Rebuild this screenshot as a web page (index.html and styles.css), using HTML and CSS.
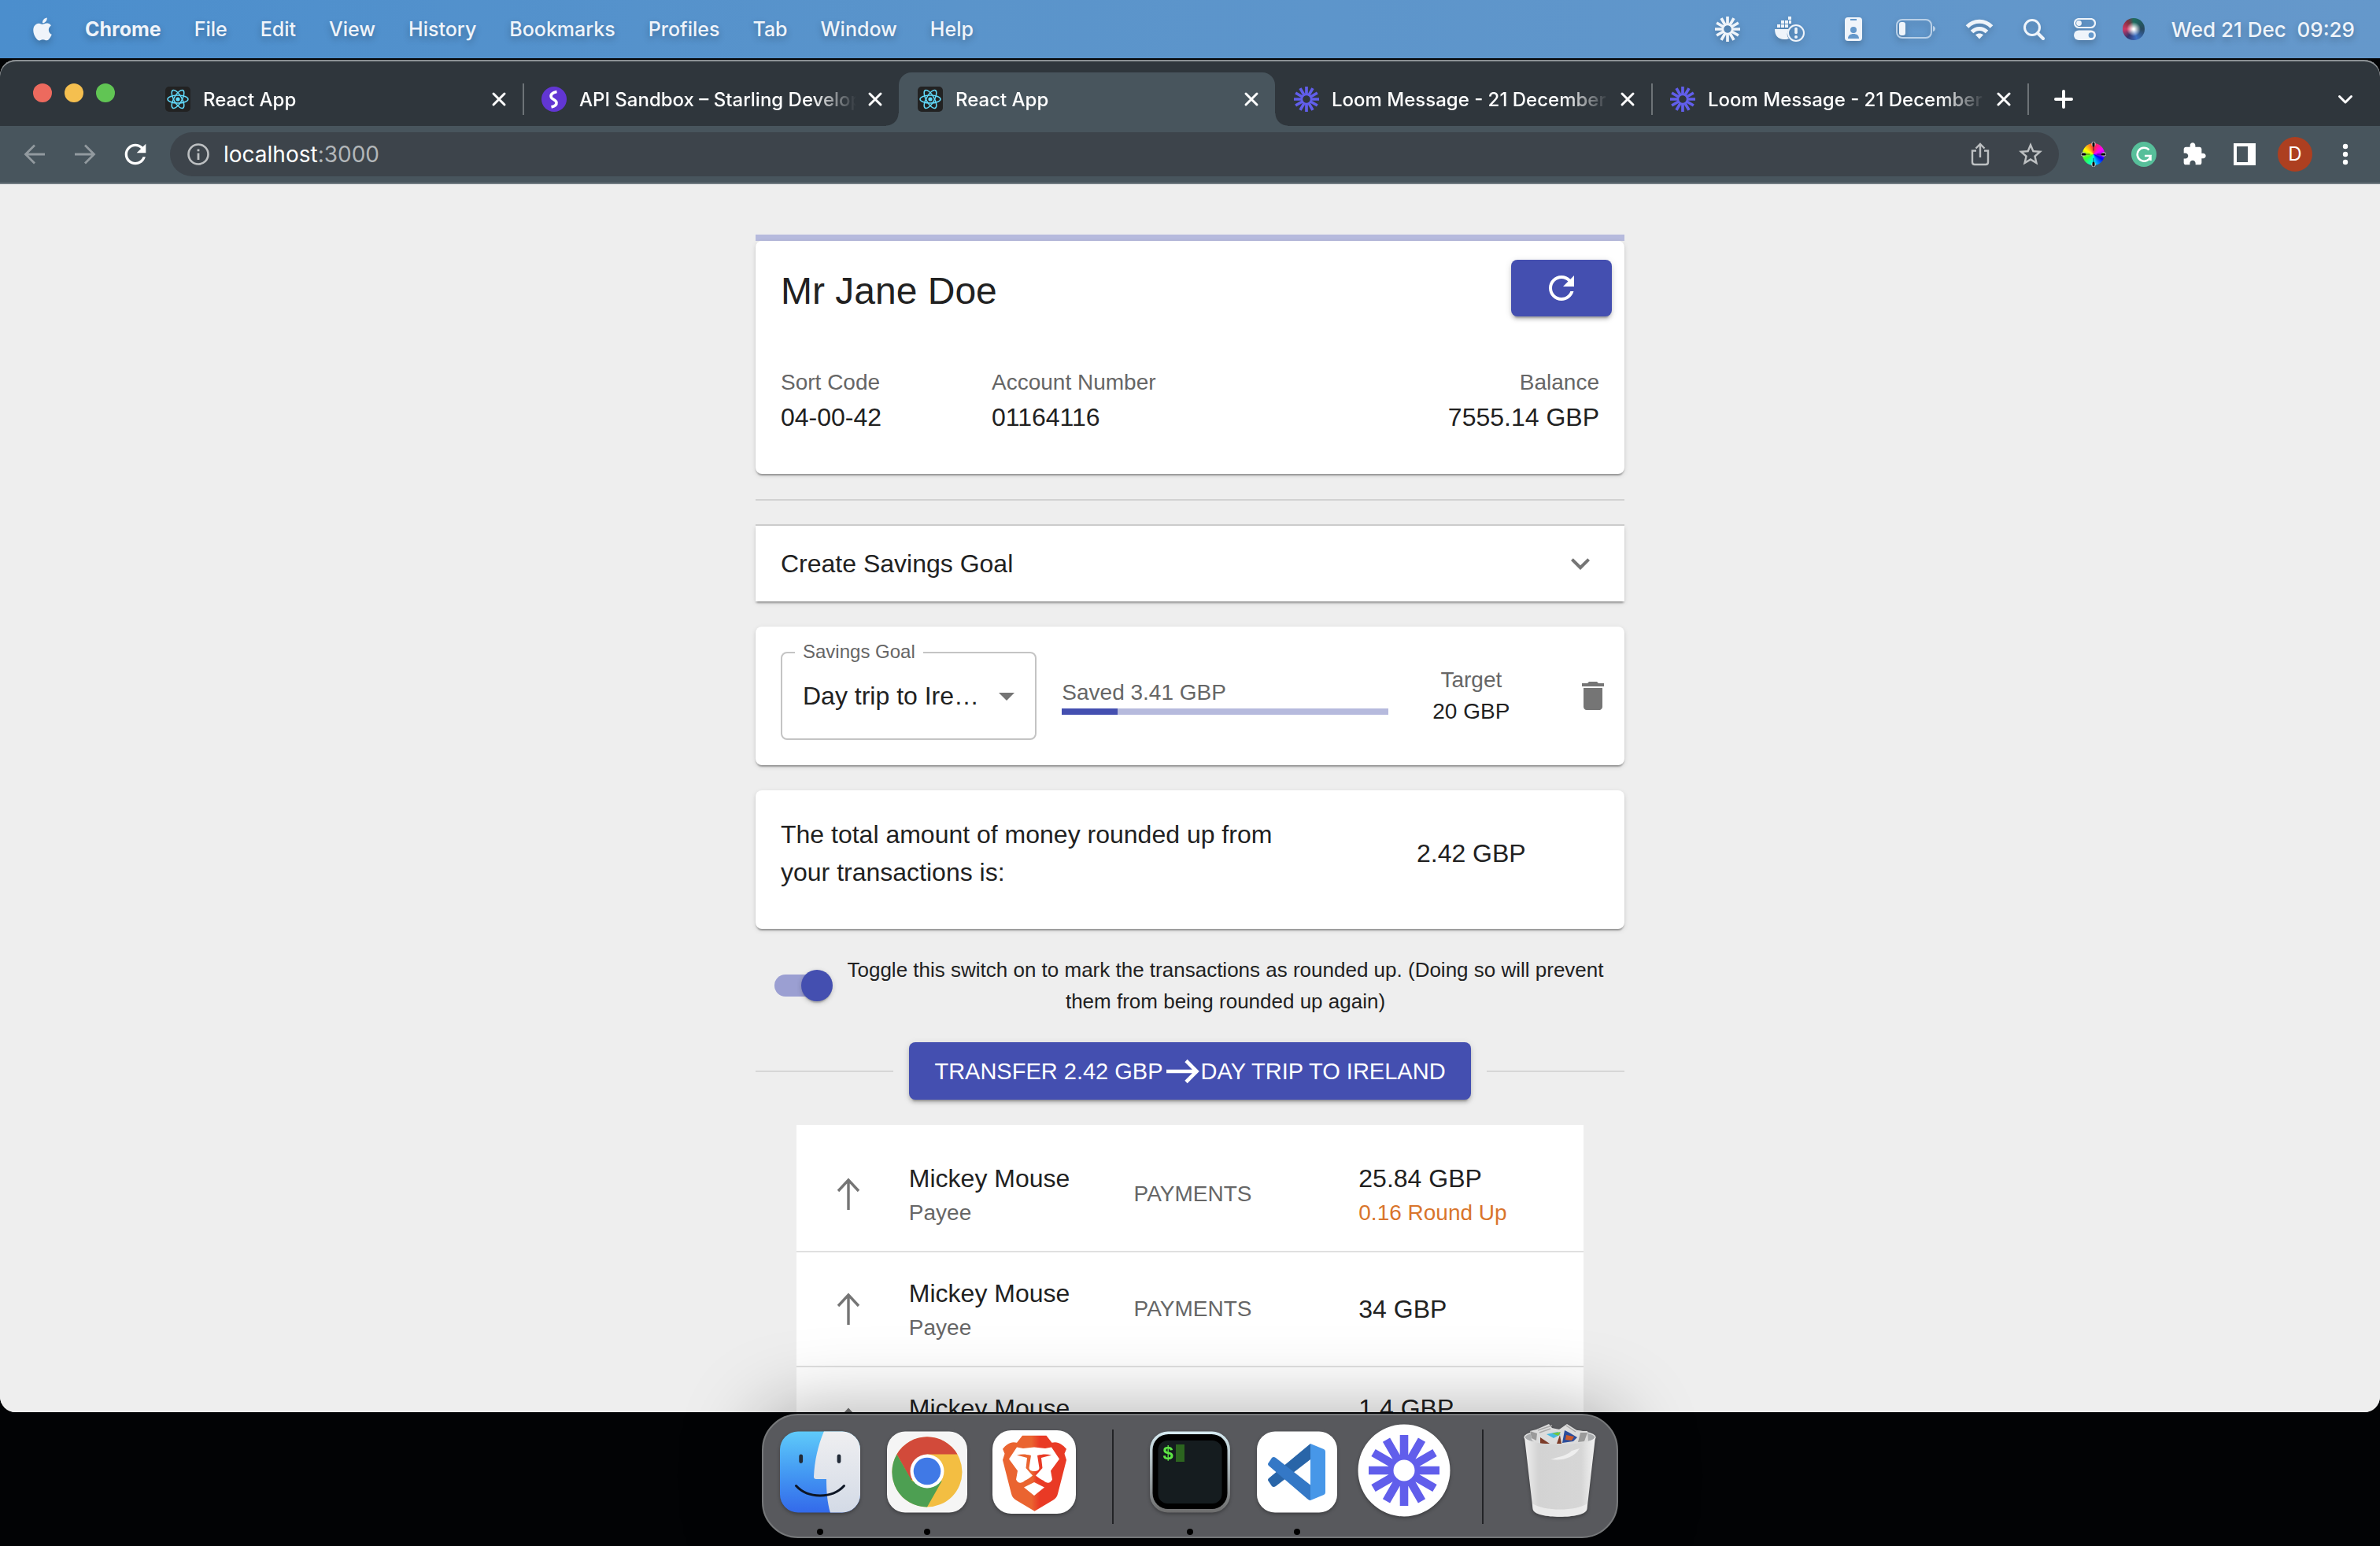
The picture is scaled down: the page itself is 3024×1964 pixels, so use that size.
FILE: index.html
```
<!DOCTYPE html>
<html lang="en">
<head>
    <meta charset="utf-8">
    <title>React App</title>
    <link rel="stylesheet" href="styles.css">
</head>
<body>

<!-- shared icons -->
<svg class="sprite" aria-hidden="true">
    <symbol id="react" viewBox="0 0 32 32">
        <rect width="32" height="32" rx="5" fill="#222"/>
        <g fill="none" stroke="#61dafb" stroke-width="1.5">
            <ellipse cx="16" cy="16" rx="13" ry="5"/>
            <ellipse cx="16" cy="16" rx="13" ry="5" transform="rotate(60 16 16)"/>
            <ellipse cx="16" cy="16" rx="13" ry="5" transform="rotate(120 16 16)"/>
        </g>
        <circle cx="16" cy="16" r="2.6" fill="#61dafb"/>
    </symbol>
    <symbol id="burst" viewBox="-16 -16 32 32">
        <g stroke="currentColor" stroke-width="3.7">
            <path d="M0-16V-5M0 16V5M-16 0H-5M16 0H5"/>
            <path d="M0-16V-5M0 16V5M-16 0H-5M16 0H5" transform="rotate(30)"/>
            <path d="M0-16V-5M0 16V5M-16 0H-5M16 0H5" transform="rotate(60)"/>
        </g>
        <circle r="6" fill="none" stroke="currentColor" stroke-width="2.4"/>
    </symbol>
    <symbol id="close" viewBox="0 0 32 32">
        <path d="M9 9l14 14M23 9L9 23" stroke="currentColor" stroke-width="3" stroke-linecap="round"/>
    </symbol>
    <symbol id="refresh" viewBox="0 0 24 24">
        <path fill="currentColor" d="M17.65 6.35C16.2 4.9 14.21 4 12 4c-4.42 0-7.99 3.58-7.99 8s3.57 8 7.99 8c3.73 0 6.84-2.55 7.73-6h-2.08c-.82 2.33-3.04 4-5.65 4-3.31 0-6-2.69-6-6s2.69-6 6-6c1.66 0 3.14.69 4.22 1.78L13 11h7V4l-2.35 2.35z"/>
    </symbol>
    <symbol id="up" viewBox="0 0 48 48">
        <path d="M24 44V6M11 20L24 6l13 14" fill="none" stroke="currentColor" stroke-width="3.4"/>
    </symbol>
</svg>

<div class="desktop">
    <header class="menubar">
        <nav class="menus">
            <svg class="apple" viewBox="2 0 20 24"><path fill="currentColor" d="M12.152 6.896c-.948 0-2.415-1.078-3.96-1.04-2.04.027-3.91 1.183-4.961 3.014-2.117 3.675-.546 9.103 1.519 12.09 1.013 1.454 2.208 3.09 3.792 3.039 1.52-.065 2.09-.987 3.935-.987 1.831 0 2.35.987 3.96.948 1.637-.026 2.676-1.48 3.676-2.948 1.156-1.688 1.636-3.325 1.662-3.415-.039-.013-3.182-1.221-3.22-4.857-.026-3.04 2.48-4.494 2.597-4.559-1.429-2.09-3.623-2.324-4.39-2.376-2-.156-3.675 1.09-4.61 1.09zM15.53 3.83c.843-1.012 1.4-2.427 1.245-3.83-1.207.052-2.662.805-3.532 1.818-.78.896-1.454 2.338-1.273 3.714 1.338.104 2.715-.688 3.559-1.701"/></svg>
            <button class="app-name">Chrome</button>
            <button>File</button>
            <button>Edit</button>
            <button>View</button>
            <button>History</button>
            <button>Bookmarks</button>
            <button>Profiles</button>
            <button>Tab</button>
            <button>Window</button>
            <button>Help</button>
        </nav>
        <div class="status">
            <svg width="32" height="32"><use href="#burst"/></svg>
            <!-- docker -->
            <svg width="56" height="36" viewBox="0 0 56 36">
                <g fill="currentColor">
                    <path d="M10 18h18c-3 4-3 9 0 12-2 1-4 1-6 1-8 0-12-5-12-13z"/>
                    <path d="M13 12h4v4h-4zM18 12h4v4h-4zM23 12h4v4h-4zM18 7h4v4h-4zM23 7h4v4h-4zM27 2h4v4h-4zM28 7h3v4h-3z"/>
                </g>
                <circle cx="37" cy="23" r="10" fill="none" stroke="currentColor" stroke-width="2"/>
                <path d="M37 17.500v5" stroke="currentColor" stroke-width="3.600" stroke-linecap="round"/>
                <circle cx="37" cy="28" r="2" fill="currentColor"/>
            </svg>
            <svg width="40" height="32" viewBox="0 0 40 32">
                <rect x="9" y="1" width="22" height="30" rx="4" fill="currentColor"/>
                <g fill="#6498cb"><rect x="16" y="3" width="8" height="2"/><circle cx="20" cy="17" r="4"/><path d="M13 28c0-4 3-6 7-6s7 2 7 6z"/></g>
            </svg>
            <!-- battery -->
            <svg width="52" height="26" viewBox="0 0 52 26">
                <rect x="1" y="1" width="44" height="23" rx="7" fill="none" stroke="#b9d0e8" stroke-width="2"/>
                <rect x="4" y="4" width="8" height="17" rx="3" fill="currentColor"/>
                <path d="M47 9c4 1 4 6 0 7z" fill="#b9d0e8"/>
            </svg>
            <svg width="40" height="32" viewBox="0 0 40 32">
                <g fill="none" stroke="currentColor" stroke-width="5"><path d="M4.500 13c8.500-9 22.500-9 31 0"/><path d="M10.500 19.500c5.500-5.500 13.500-5.500 19 0"/></g>
                <path d="M20 28.500l-5-5.200c3-2.500 7-2.500 10 0z" fill="currentColor"/>
            </svg>
            <svg width="32" height="32" viewBox="0 0 32 32"><g fill="none" stroke="currentColor"><circle cx="13" cy="14" r="9.500" stroke-width="3"/><path d="M20 21l7 7" stroke-width="4" stroke-linecap="round"/></g></svg>
            <svg width="28" height="28" viewBox="0 0 28 28">
                <rect x="1" y="1" width="26" height="11" rx="5.500" fill="none" stroke="currentColor" stroke-width="2.200"/><circle cx="6.500" cy="6.500" r="3.400" fill="currentColor"/>
                <rect y="15.500" width="28" height="12.500" rx="6.200" fill="currentColor"/><circle cx="22" cy="21.700" r="3.400" fill="#6498cb"/>
            </svg>
            <span class="siri"></span>
            <time>Wed 21 Dec &nbsp;09:29</time>
        </div>
    </header>

    <section class="window">
        <div class="tabstrip">
            <div class="lights"><i class="red"></i><i class="yellow"></i><i class="green"></i></div>
            <div class="tab divided">
                <svg class="favicon"><use href="#react"/></svg>
                <span class="tab-title">React App</span>
                <button class="tab-close" aria-label="Close tab"><svg><use href="#close"/></svg></button>
            </div>
            <div class="tab">
                <svg class="favicon" viewBox="0 0 32 32"><circle cx="16" cy="16" r="16" fill="#6236d3"/><path d="M19.500 6.500c-6 1-8.500 4-7 7.500 1 2 6 3 6.500 6 .4 3-2 5-6.500 6" fill="none" stroke="#fff" stroke-width="3.600"/></svg>
                <span class="tab-title">API Sandbox – Starling Develop</span>
                <button class="tab-close" aria-label="Close tab"><svg><use href="#close"/></svg></button>
            </div>
            <div class="tab active">
                <svg class="favicon"><use href="#react"/></svg>
                <span class="tab-title">React App</span>
                <button class="tab-close" aria-label="Close tab"><svg><use href="#close"/></svg></button>
            </div>
            <div class="tab divided">
                <svg class="favicon loom"><use href="#burst"/></svg>
                <span class="tab-title">Loom Message - 21 December</span>
                <button class="tab-close" aria-label="Close tab"><svg><use href="#close"/></svg></button>
            </div>
            <div class="tab divided">
                <svg class="favicon loom"><use href="#burst"/></svg>
                <span class="tab-title">Loom Message - 21 December</span>
                <button class="tab-close" aria-label="Close tab"><svg><use href="#close"/></svg></button>
            </div>
            <button class="strip-btn" aria-label="New tab"><svg width="32" height="32" viewBox="0 0 32 32"><path d="M16 6v20M6 16h20" stroke="currentColor" stroke-width="4" stroke-linecap="round"/></svg></button>
            <button class="strip-btn last" aria-label="Search tabs"><svg width="32" height="32" viewBox="0 0 32 32"><path d="M8.500 12.500L16 20l7.500-7.500" fill="none" stroke="currentColor" stroke-width="3" stroke-linecap="round" stroke-linejoin="round"/></svg></button>
        </div>

        <div class="toolbar">
            <button class="dim" aria-label="Back"><svg width="32" height="32" viewBox="0 0 32 32"><path d="M29 16H5M16 4.500L4.500 16 16 27.500" fill="none" stroke="currentColor" stroke-width="2.800"/></svg></button>
            <button class="dim" aria-label="Forward"><svg width="32" height="32" viewBox="0 0 32 32"><path d="M3 16h24M16 4.500L27.500 16 16 27.500" fill="none" stroke="currentColor" stroke-width="2.800"/></svg></button>
            <button aria-label="Reload"><svg width="40" height="40"><use href="#refresh"/></svg></button>
            <div class="omnibox">
                <svg width="28" height="28" viewBox="0 0 28 28"><circle cx="14" cy="14" r="12.500" fill="none" stroke="currentColor" stroke-width="2.600"/><path d="M14 12.500V21M14 7.500v2.800" stroke="currentColor" stroke-width="2.800"/></svg>
                <div class="url">localhost<span>:3000</span></div>
                <button aria-label="Share"><svg width="32" height="32" viewBox="0 0 32 32"><path d="M11 11.500H6V26q0 3 3 3h14q3 0 3-3V11.500h-5M16 20V4M10.500 8.500L16 3l5.500 5.500" fill="none" stroke="currentColor" stroke-width="2.400"/></svg></button>
                <button aria-label="Bookmark this tab"><svg width="36" height="36" viewBox="0 0 24 24"><path fill="currentColor" d="M22 9.240l-7.190-.62L12 2 9.190 8.630 2 9.240l5.460 4.730L5.820 21 12 17.270 18.180 21l-1.630-7.030L22 9.240zM12 15.400l-3.760 2.270 1-4.280-3.320-2.880 4.380-.38L12 6.100l1.710 4.040 4.380.38-3.320 2.880 1 4.280L12 15.400z"/></svg></button>
            </div>
            <button class="ext" aria-label="Color picker"><span class="wheel"></span><svg class="wheel-pins" width="32" height="32" viewBox="0 0 32 32"><g stroke-linecap="round"><path d="M16 2.500v1M16 28.500v1M2.500 16h1M28.500 16h1" stroke="#ddd" stroke-width="5"/><path d="M16 2v3M16 27v3M2 16h3M27 16h3" stroke="#000" stroke-width="3"/><path d="M16 5v6M16 21v6M5 16h6M21 16h6" stroke="#222" stroke-width="1.200" opacity=".7"/></g></svg></button>
            <button class="ext" aria-label="Grammarly"><svg width="32" height="32" viewBox="0 0 32 32"><circle cx="16" cy="16" r="16" fill="#57bf9a"/><path d="M22.500 10.500a8.500 8.500 0 1 0 2 7.500H17M24.500 18v6" fill="none" stroke="#fff" stroke-width="2.500"/></svg></button>
            <button class="ext" aria-label="Extensions"><svg width="32" height="32" viewBox="0 0 24 24"><path fill="currentColor" d="M20.500 11H19V7c0-1.100-.9-2-2-2h-4V3.500C13 2.120 11.880 1 10.500 1S8 2.120 8 3.500V5H4c-1.100 0-1.990.9-1.990 2v3.800H3.500c1.490 0 2.700 1.210 2.700 2.700s-1.210 2.700-2.700 2.700H2V20c0 1.100.9 2 2 2h3.800v-1.500c0-1.490 1.210-2.700 2.700-2.700s2.700 1.210 2.700 2.700V22H17c1.100 0 2-.9 2-2v-4h1.500c1.380 0 2.500-1.120 2.500-2.500S21.880 11 20.500 11z"/></svg></button>
            <button class="ext" aria-label="Side panel"><svg width="28" height="28" viewBox="0 0 28 28"><path fill="currentColor" fill-rule="evenodd" d="M0 0h28v28H0zM4 4v20h14V4z"/></svg></button>
            <button class="ext" aria-label="Profile"><span class="avatar">D</span></button>
            <button class="ext" aria-label="Menu"><svg width="8" height="28" viewBox="0 0 8 28"><g fill="currentColor"><circle cx="4" cy="4" r="3.200"/><circle cx="4" cy="14" r="3.200"/><circle cx="4" cy="24" r="3.200"/></g></svg></button>
        </div>

        <main class="page">
            <div class="app">
                <div class="account">
                    <div class="bar"></div>
                    <div class="card">
                        <div class="card-header">
                            <h1>Mr Jane Doe</h1>
                            <button class="btn" aria-label="Refresh"><svg width="48" height="48"><use href="#refresh"/></svg></button>
                        </div>
                        <div class="grid">
                            <div class="span3"><p class="small">Sort Code</p><p>04-00-42</p></div>
                            <div class="span3"><p class="small">Account Number</p><p>01164116</p></div>
                            <div class="span6 right"><p class="small">Balance</p><p>7555.14 GBP</p></div>
                        </div>
                    </div>
                </div>

                <hr>

                <button class="accordion">
                    <span>Create Savings Goal</span>
                    <svg width="48" height="48" viewBox="0 0 24 24"><path fill="#757575" d="M16.590 8.590 12 13.170 7.410 8.590 6 10l6 6 6-6z"/></svg>
                </button>

                <div class="card goal">
                    <div class="grid middle">
                        <div class="span4 select-box">
                            <label for="goal">Savings Goal</label>
                            <select id="goal">
                                <option>Day trip to Ireland</option>
                            </select>
                            <svg viewBox="0 0 24 24"><path fill="#757575" d="M7 10l5 5 5-5z"/></svg>
                        </div>
                        <div class="span5">
                            <p class="small">Saved 3.41 GBP</p>
                            <div class="bar"><div class="fill" style="width: 17.050%"></div></div>
                        </div>
                        <div class="span2 center">
                            <p class="small">Target</p>
                            <p class="small dark">20 GBP</p>
                        </div>
                        <button class="delete" aria-label="Delete goal"><svg width="48" height="48" viewBox="0 0 24 24"><path fill="currentColor" d="M6 19c0 1.100.9 2 2 2h8c1.100 0 2-.9 2-2V7H6v12zM19 4h-3.500l-1-1h-5l-1 1H5v2h14V4z"/></svg></button>
                    </div>
                </div>

                <div class="card total">
                    <div class="grid middle">
                        <p class="span8">The total amount of money rounded up from your transactions is:</p>
                        <p class="span4 center">2.42 GBP</p>
                    </div>
                </div>

                <div class="toggle">
                    <input type="checkbox" id="mark" checked>
                    <label for="mark">Toggle this switch on to mark the transactions as rounded up. (Doing so will prevent them from being rounded up again)</label>
                </div>

                <div class="transfer">
                    <button class="btn">
                        TRANSFER 2.42 GBP
                        <svg width="48" height="48" viewBox="0 0 48 48"><path d="M4 24h38M29 10.500L42.500 24 29 37.500" fill="none" stroke="currentColor" stroke-width="4.600"/></svg>
                        DAY TRIP TO IRELAND
                    </button>
                </div>

                <ul class="list">
                    <li>
                        <svg><use href="#up"/></svg>
                        <div><p>Mickey Mouse</p><p class="small">Payee</p></div>
                        <p class="small">PAYMENTS</p>
                        <div><p>25.84 GBP</p><p class="small orange">0.16 Round Up</p></div>
                    </li>
                    <li>
                        <svg><use href="#up"/></svg>
                        <div><p>Mickey Mouse</p><p class="small">Payee</p></div>
                        <p class="small">PAYMENTS</p>
                        <p>34 GBP</p>
                    </li>
                    <li>
                        <svg><use href="#up"/></svg>
                        <div><p>Mickey Mouse</p><p class="small">Payee</p></div>
                        <p class="small">PAYMENTS</p>
                        <div><p>1.4 GBP</p><p class="small orange">0.6 Round Up</p></div>
                    </li>
                </ul>
            </div>
        </main>
    </section>

    <footer class="dock">
        <!-- finder -->
        <div class="dock-item running">
            <svg viewBox="0 0 136 136">
                <defs>
                    <linearGradient id="fblue" x1="0" y1="0" x2="0" y2="1"><stop offset="0" stop-color="#5fcbfa"/><stop offset=".5" stop-color="#449af3"/><stop offset="1" stop-color="#3369ea"/></linearGradient>
                    <linearGradient id="fgrey" x1="0" y1="0" x2="0" y2="1"><stop offset="0" stop-color="#efeff1"/><stop offset="1" stop-color="#d3dae6"/></linearGradient>
                    <clipPath id="fclip"><rect x="17" y="16.500" width="102" height="103" rx="23"/></clipPath>
                </defs>
                <g clip-path="url(#fclip)">
                    <rect x="16" y="16" width="104" height="104" fill="url(#fblue)"/>
                    <path d="M73 16C65 35 61 54 60 74q0 3 3 3h13c0 15 1 29 5 43h40V16z" fill="url(#fgrey)"/>
                </g>
                <path d="M43.700 48v6.500M92 48v6.500" stroke="#222b38" stroke-width="4.800" stroke-linecap="round"/>
                <path d="M37.500 85.500c15 16.500 46 16.500 61 0" fill="none" stroke="#0d1524" stroke-width="3" stroke-linecap="round"/>
            </svg>
        </div>
        <!-- chrome -->
        <div class="dock-item running">
            <svg viewBox="0 0 136 136">
                <rect x="17" y="16.500" width="102" height="103" rx="23" fill="#f5f5f5"/>
                <circle cx="68" cy="68" r="44.500" fill="#f3be42"/>
                <path d="M68 45.500h38.500A44.500 44.500 0 0 0 29.500 45.500L48 79z" fill="#d24a3a"/>
                <path d="M29.500 45.500A44.500 44.500 0 0 0 68 112.500L87 79 68 88 48.500 79z" fill="#4d9f52"/>
                <circle cx="68" cy="67" r="21.500" fill="#fff"/>
                <circle cx="68" cy="67" r="17.300" fill="#4079e6"/>
            </svg>
        </div>
        <!-- brave -->
        <div class="dock-item">
            <svg viewBox="0 0 136 136">
                <defs><linearGradient id="brave"><stop offset=".45" stop-color="#ea6430"/><stop offset=".58" stop-color="#e93a25"/></linearGradient></defs>
                <rect x="15" y="15" width="106" height="106" rx="24" fill="#fff"/>
                <path d="M53 21.700h30.500l7 9c8-2 13 2 18.500 8l-2.500 6 2.500 8-11 43c-1 4-3 6-6 8l-23.500 14-23.500-14c-3-2-5-4-6-8l-11-43 2.500-8-2.500-6c5-6 10-10 18-8z" fill="url(#brave)"/>
                <path d="M68 36.500l14 1.500 8-1.500 10 15-11 15 2 11c-3 6-7 5-11 1.500l-12-6-12 6c-4 3.500-8 4.500-11-1.500l2-11-11-15 10-15 8 1.500z" fill="#fff"/>
                <path d="M46 46.500c6-1.500 11-1.500 18 .5l-2.500 16q.5 4 6.500 4t6.500-4L72 47c7-2 12-2 18-.5l-13 3.500 1.500 13-8.500 9.500 7 5.500-9 4-9-4 7-5.500-8.500-9.500L59 50z" fill="url(#brave)"/>
                <path d="M55 87.500l13-6.500 13 6.500L68 98z" fill="#fff"/>
            </svg>
        </div>
        <div class="dock-sep"></div>
        <!-- terminal -->
        <div class="dock-item running">
            <svg viewBox="0 0 136 136">
                <defs><linearGradient id="steel" x1="0" y1="0" x2="0" y2="1"><stop offset="0" stop-color="#d6ebf2"/><stop offset="1" stop-color="#6d6d6d"/></linearGradient></defs>
                <rect x="17" y="16.500" width="102" height="103" rx="23" fill="url(#steel)"/>
                <rect x="20.500" y="20" width="95" height="95" rx="20"/>
                <rect x="27.500" y="28" width="81" height="80" rx="12" fill="#151c1f"/>
                <text x="33" y="52" class="prompt">$</text>
                <rect x="50" y="33" width="11" height="22" fill="#2c651f"/>
            </svg>
        </div>
        <!-- vs code -->
        <div class="dock-item running">
            <svg viewBox="0 0 136 136">
                <rect x="17" y="16.500" width="102" height="103" rx="23" fill="#fff"/>
                <path d="M85 32L32 76q-2 2 0 4l4 6q2 2 5 0L85 52z" fill="#2965a8"/>
                <path d="M32 60q-2-2 0-4l4-6q2-2 5 0L85 84.500V104q-2 0-4-2z" fill="#3478c6"/>
                <path d="M85 32l17 7q2 1 2 3v52q0 2-2 3l-17 7z" fill="#4797e8"/>
            </svg>
        </div>
        <!-- loom -->
        <div class="dock-item">
            <svg viewBox="0 0 136 136">
                <circle cx="68" cy="66" r="58.500" fill="#fff"/>
                <g stroke="#615eeb" stroke-width="10.600">
                    <path d="M68 21v28M68 83v28M23 66h28M85 66h28"/>
                    <path d="M68 21v28M68 83v28M23 66h28M85 66h28" transform="rotate(30 68 66)"/>
                    <path d="M68 21v28M68 83v28M23 66h28M85 66h28" transform="rotate(60 68 66)"/>
                </g>
                <circle cx="68" cy="66" r="17" fill="none" stroke="#615eeb" stroke-width="7"/>
            </svg>
        </div>
        <div class="dock-sep"></div>
        <!-- trash -->
        <div class="dock-item">
            <svg viewBox="0 0 136 136">
                <defs><linearGradient id="bin"><stop offset="0" stop-color="#eee"/><stop offset=".2" stop-color="#d3d3d3"/><stop offset=".8" stop-color="#d6d6d6"/><stop offset="1" stop-color="#f2f2f2"/></linearGradient></defs>
                <ellipse cx="68" cy="24" rx="45" ry="9.500" fill="#a9abad" stroke="#e4e4e4" stroke-width="1.500"/>
                <path d="M30 16l8-2 16-7 4 5 9 2 10-7 14 9 12 0 1 13-16 8H42L32 27z" fill="#dcdcdc"/>
                <path d="M30 16l9 3-1 9-6-3zM94 18l9 0-4 11-8 1z" fill="#9a9a9a"/>
                <path d="M51 20l14-3 4 3-9 5z" fill="#46b8e0"/>
                <path d="M58 19l11-2-3 5z" fill="#74c63d"/>
                <path d="M43 24l12 8h-12zM64 32l4-11 2 11z" fill="#7c3b28"/>
                <path d="M74 15l6 3 10 6-5 5-14 2z" fill="#2c4d9b"/>
                <path d="M76 21l10 2-3 5-8-1z" fill="#cc5a2b"/>
                <path d="M40 15l18-6M42 18l14-5M76 9l12 8" stroke="#aaa" stroke-width="1.500"/>
                <path d="M23 24c8 12 82 12 90 0l-10.500 91c-2 13-67 13-69 0z" fill="url(#bin)"/>
                <path d="M56 52c15 2 30-2 37-14l-10 3c-5 6-17 8-27 11z" fill="#eee"/>
                <path d="M33 108c15 10 55 10 70 0l-1 8c-2 12-66 12-68 0z" fill="#f2f2f2" opacity=".7"/>
            </svg>
        </div>
    </footer>
</div>

</body>
</html>
```
FILE: styles.css
```
* {
    margin: 0;
    padding: 0;
    box-sizing: border-box;
}

body {
    background: #020305;
    font-family: Inter, sans-serif;
    color: #fff;
}

button {
    background: none;
    border: none;
    color: inherit;
    font: inherit;
    cursor: pointer;
}

svg {
    display: block;
    flex-shrink: 0;
}

.sprite {
    position: absolute;
    width: 0;
    height: 0;
}

.desktop {
    display: flex;
    flex-direction: column;
    height: 100vh;
    overflow: hidden;
}

/* menu bar */
.menubar {
    display: flex;
    justify-content: space-between;
    align-items: center;
    height: 74px;
    padding: 0 32px 0 42px;
    background: linear-gradient(90deg, #4b8ecd, #5a94cb 40%, #6598cb);
    color: #eff4fa;
    font-size: 25px;
    font-weight: 500;
}

.menus {
    display: flex;
    align-items: center;
    gap: 42px;
}

.menus button, .menubar time {
    text-shadow: 0 4px 8px rgba(0, 0, 0, 0.25);
}

.menubar time {
    font-size: 26px;
}

.menubar svg {
    filter: drop-shadow(0 4px 4px rgba(0, 0, 0, 0.2));
}

.apple {
    width: 24px;
    height: 32px;
}

.menus .app-name {
    font-weight: 700;
}

.status {
    display: flex;
    align-items: center;
    gap: 34px;
}

.siri {
    width: 28px;
    height: 28px;
    border-radius: 50%;
    background: radial-gradient(circle, #fff 5%, rgba(255, 255, 255, 0) 45%), conic-gradient(#1d6d5f, #29485e 25%, #3a6fc4 45%, #31346e 60%, #cf3763 75%, #7d3140 90%, #1d6d5f);
}

/* browser window */
.window {
    display: flex;
    flex-direction: column;
    flex: 1;
    min-height: 0;
    margin-top: 2px;
    border-radius: 20px;
    overflow: hidden;
    background: #eee;
}

.tabstrip {
    display: flex;
    align-items: center;
    height: 84px;
    border-radius: 20px 20px 0 0;
    background: #2f363c;
    box-shadow: inset 0 2px #8b9093;
}

.lights {
    display: flex;
    gap: 16px;
    padding: 0 40px 0 42px;
}

.lights i {
    width: 24px;
    height: 24px;
    border-radius: 50%;
}

.red {
    background: #ed6a5e;
}

.yellow {
    background: #f5bf4f;
}

.green {
    background: #61c554;
}

.tab {
    position: relative;
    display: flex;
    align-items: center;
    flex: 0 1 478px;
    min-width: 0;
    height: 68px;
    margin-top: 16px;
    padding: 0 14px 0 24px;
    font-size: 24px;
    font-weight: 500;
}

.tab.active {
    border-radius: 16px 16px 0 0;
    background: #48555d;
}

/* curved feet of the open tab */
.tab.active::before, .tab.active::after {
    content: "";
    position: absolute;
    bottom: 0;
    width: 16px;
    height: 16px;
}

.tab.active::before {
    right: 100%;
    background: radial-gradient(circle at 0 0, transparent 15px, #48555d 16px);
}

.tab.active::after {
    left: 100%;
    background: radial-gradient(circle at 100% 0, transparent 15px, #48555d 16px);
}

.tab.divided::after {
    content: "";
    position: absolute;
    right: -2px;
    top: 14px;
    width: 2px;
    height: 40px;
    background: #6d7377;
}

.favicon {
    width: 32px;
    height: 32px;
}

.loom {
    color: #615eeb;
}

.tab-title {
    flex: 1;
    min-width: 0;
    margin: 0 8px 0 16px;
    overflow: hidden;
    white-space: nowrap;
    mask-image: linear-gradient(90deg, #000 calc(100% - 56px), transparent);
}

.tab-close svg {
    width: 32px;
    height: 32px;
}

.strip-btn {
    margin: 16px 28px 0 30px;
}

.strip-btn.last {
    margin-left: auto;
}

.toolbar {
    display: flex;
    align-items: center;
    height: 74px;
    padding: 0 12px;
    border-bottom: 2px solid #6f7a80;
    background: #48555d;
}

.toolbar > button {
    position: relative;
    display: flex;
    justify-content: center;
    align-items: center;
    width: 64px;
    height: 64px;
}

.toolbar .dim {
    color: #929a9f;
}

.omnibox {
    display: flex;
    align-items: center;
    flex: 1;
    height: 56px;
    margin: 0 12px;
    padding: 0 18px 0 22px;
    border-radius: 28px;
    background: #3d444b;
    color: #bdc0c2;
}

.omnibox button {
    margin-left: 30px;
}

.url {
    flex: 1;
    padding-left: 18px;
    font-size: 28px;
    color: #fff;
}

.url span {
    color: #b2b6b9;
}

.wheel {
    width: 28px;
    height: 28px;
    border-radius: 50%;
    background: conic-gradient(#f33, #f0f 17%, #a0f 25%, #00f 33%, #0ff 50%, #3f3 67%, #ff0 83%, #f33);
}

.wheel-pins {
    position: absolute;
}

.avatar {
    width: 44px;
    border-radius: 50%;
    background: #ad3f20;
    font-size: 24px;
    line-height: 44px;
}

/* page */
.page {
    flex: 1;
    min-height: 0;
    overflow: hidden;
    padding-top: 64px;
    background: #eee;
    color: #212121;
    font-family: "Liberation Sans", Arial, sans-serif;
    font-size: 32px;
    line-height: 48px;
}

.app {
    display: flex;
    flex-direction: column;
    gap: 32px;
    max-width: 1104px;
    margin: 0 auto;
}

.bar {
    height: 8px;
    background: #b6badd;
}

.fill {
    height: 8px;
    background: #444fb0;
}

.card {
    padding: 32px 32px 48px;
    border-radius: 8px;
    background: #fff;
    box-shadow: 0 4px 2px -2px rgba(0, 0, 0, 0.2), 0 2px 2px rgba(0, 0, 0, 0.14), 0 2px 6px rgba(0, 0, 0, 0.12);
}

.goal {
    padding-bottom: 32px;
}

.card-header {
    display: flex;
    justify-content: space-between;
    align-items: flex-start;
    padding-bottom: 64px;
}

.card-header h1 {
    font-size: 48px;
    font-weight: 400;
    line-height: 64px;
}

.card-header .btn {
    margin: -8px -16px -8px 0;
}

.btn {
    display: flex;
    justify-content: center;
    align-items: center;
    min-width: 128px;
    height: 72px;
    padding: 0 32px;
    border-radius: 8px;
    background: #444fb0;
    color: #fff;
    font-size: 29px;
    box-shadow: 0 6px 2px -4px rgba(0, 0, 0, 0.2), 0 4px 4px rgba(0, 0, 0, 0.14), 0 2px 10px rgba(0, 0, 0, 0.12);
}

.grid {
    display: grid;
    grid-template-columns: repeat(12, 1fr);
    column-gap: 32px;
}

.middle {
    align-items: center;
}

.span2 {
    grid-column: span 2;
}

.span3 {
    grid-column: span 3;
}

.span4 {
    grid-column: span 4;
}

.span5 {
    grid-column: span 5;
}

.span6 {
    grid-column: span 6;
}

.span8 {
    grid-column: span 8;
}

.right {
    text-align: right;
}

.center {
    text-align: center;
}

.small {
    font-size: 28px;
    line-height: 40px;
    color: #666;
}

.dark {
    color: #212121;
}

.orange {
    color: #d9752c;
}

hr {
    height: 2px;
    border: none;
    background: #d2d2d2;
}

.accordion {
    display: flex;
    justify-content: space-between;
    align-items: center;
    height: 96px;
    padding: 0 32px;
    background: #fff;
    box-shadow: 0 -2px #cbcbcb, 0 4px 2px -2px rgba(0, 0, 0, 0.2), 0 2px 2px rgba(0, 0, 0, 0.14), 0 2px 6px rgba(0, 0, 0, 0.12);
}

.select-box {
    position: relative;
}

.select-box label {
    position: absolute;
    left: 18px;
    top: -14px;
    padding: 0 10px;
    background: #fff;
    color: #666;
    font-size: 24px;
    line-height: 28px;
}

.select-box select {
    display: block;
    width: 100%;
    height: 112px;
    padding: 0 68px 0 26px;
    border: 2px solid #c4c4c4;
    border-radius: 8px;
    appearance: none;
    background: #fff;
    color: inherit;
    font: inherit;
    text-overflow: ellipsis;
}

.select-box svg {
    position: absolute;
    right: 14px;
    top: 32px;
    width: 48px;
    height: 48px;
    pointer-events: none;
}

.delete {
    justify-self: end;
    margin-right: -32px;
    padding: 16px;
    color: #757575;
}

.toggle {
    display: flex;
    align-items: center;
    gap: 20px;
    padding: 0 22px 0 24px;
}

.toggle input {
    position: relative;
    flex-shrink: 0;
    width: 68px;
    height: 28px;
    border-radius: 14px;
    appearance: none;
    background: #9b9fd2;
}

.toggle input::before {
    content: "";
    position: absolute;
    right: -6px;
    top: -6px;
    width: 40px;
    height: 40px;
    border-radius: 50%;
    background: #444fb0;
    box-shadow: 0 4px 2px -2px rgba(0, 0, 0, 0.2), 0 2px 6px rgba(0, 0, 0, 0.2);
}

.toggle label {
    flex: 1;
    font-size: 26px;
    line-height: 40px;
    text-align: center;
}

.transfer {
    display: flex;
    align-items: center;
    gap: 20px;
}

.transfer .btn {
    height: 73px;
}

.transfer::before, .transfer::after {
    content: "";
    flex: 1;
    height: 2px;
    background: #d6d6d6;
}

.list {
    margin: 0 52px;
    background: #fff;
    padding: 16px 0;
    list-style: none;
}

.list li {
    display: grid;
    grid-template-columns: 1fr 2fr 2fr 2fr;
    align-items: center;
    padding: 28px 0;
    border-bottom: 2px solid #e0e0e0;
}

.list svg {
    width: 48px;
    height: 48px;
    margin-left: 42px;
    color: #757575;
}

/* dock */
.dock {
    position: relative;
    display: flex;
    align-self: center;
    height: 158px;
    margin: 2px 0 10px;
    padding: 4px;
    border: 2px solid #757779;
    border-radius: 46px;
    background: #58595d;
    box-shadow: 0 0 100px rgba(0, 0, 0, 0.35);
}

.dock-item {
    width: 136px;
}

.dock-item svg {
    width: 136px;
    height: 136px;
    filter: drop-shadow(0 2px 2px rgba(0, 0, 0, 0.3));
}

.dock-item.running::after {
    content: "";
    display: block;
    width: 8px;
    height: 8px;
    margin: 4px auto;
    border-radius: 50%;
    background: #000;
}

.dock-sep {
    width: 2px;
    height: 120px;
    margin: 14px 29px 0 31px;
    background: #222326;
}

.prompt {
    fill: #5ee645;
    font: bold 24px "Liberation Mono", monospace;
}
```
